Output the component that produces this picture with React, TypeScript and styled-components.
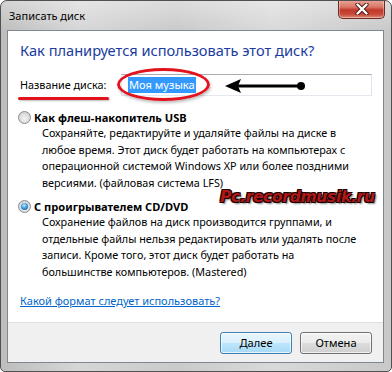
import React from "react";
import styled, { createGlobalStyle } from "styled-components";

const GlobalStyle = createGlobalStyle`
  html, body { margin: 0; padding: 0; background: #ffffff; }
  body { font-family: "Noto Sans", "Open Sans", sans-serif; }
  * { box-sizing: border-box; }
`;

const Window = styled.div`
  position: relative;
  width: 392px;
  height: 372px;
  border: 1px solid #505050;
  border-radius: 7px 7px 5px 5px;
  background:
    linear-gradient(to bottom, rgba(255,255,255,0.35), rgba(255,255,255,0) 30px),
    linear-gradient(to right, #bdbdbd 0%, #d6d6d6 20%, #cacaca 45%, #d9d9d9 70%, #c8c8c8 100%);
  display: flex;
  flex-direction: column;
  overflow: hidden;
`;

const TitleBar = styled.div`
  height: 29px;
  display: flex;
  justify-content: space-between;
  align-items: flex-start;
  flex-shrink: 0;
`;

const Title = styled.div`
  padding: 7px 0 0 8px;
  font-size: 11px;
  color: #000;
  line-height: 16px;
`;

const CloseButton = styled.div`
  width: 47px;
  height: 19px;
  margin: -1px 6px 0 0;
  border: 1px solid #6b2a22;
  border-top: none;
  border-radius: 0 0 5px 5px;
  background: linear-gradient(to bottom, #e9a899 0%, #d97565 40%, #c0392b 55%, #c94a3a 80%, #de8c7a 100%);
  display: flex;
  align-items: center;
  justify-content: center;
  box-shadow: inset 0 0 0 1px rgba(255,255,255,0.35);
`;

const Content = styled.div`
  flex: 1;
  margin: 0 7px 8px 6px;
  border: 1px solid #7f8790;
  display: flex;
  flex-direction: column;
  background: #ffffff;
`;

const Body = styled.div`
  flex: 1;
  padding: 9px 10px 0 12px;
  display: flex;
  flex-direction: column;
  color: #000;
  font-size: 10.8px;
`;

const Heading = styled.div`
  font-size: 14.6px;
  line-height: 20px;
  color: #1a3c9e;
`;

const NameRow = styled.div`
  margin-top: 14px;
  display: flex;
  align-items: center;
  height: 22px;
`;

const NameLabel = styled.span`
  width: 101px;
  flex-shrink: 0;
  line-height: 16px;
`;

const TextBox = styled.div`
  flex: 1;
  height: 22px;
  margin-right: 1px;
  border: 1px solid #e2e3ea;
  border-top-color: #abadb3;
  border-bottom-color: #e3e9ef;
  display: flex;
  align-items: center;
  padding-left: 6px;
`;

const Selection = styled.span`
  background: #3399ff;
  color: #ffffff;
  line-height: 16px;
  padding: 0 1px;
  font-size: 11.1px;
`;

const OptionRow = styled.label<{ $gap: number }>`
  margin-top: ${(p) => p.$gap}px;
  margin-left: -2px;
  display: flex;
  align-items: center;
  gap: 3px;
  height: 16px;
  font-weight: bold;
  font-size: 11.1px;
`;

const Radio = styled.span<{ $checked?: boolean }>`
  position: relative;
  width: 13px;
  height: 13px;
  border-radius: 50%;
  border: 1px solid #8a8b8c;
  background: radial-gradient(circle at 50% 60%, #f4f4f4 0%, #dcdcdc 55%, #c8c8c8 100%);
  flex-shrink: 0;
  &::after {
    content: "";
    position: absolute;
    left: 2px;
    top: 2px;
    width: 7px;
    height: 7px;
    border-radius: 50%;
    display: ${(p) => (p.$checked ? "block" : "none")};
    background: radial-gradient(circle at 45% 35%, #c8ecff 0%, #3f9ae0 45%, #0e4f93 100%);
  }
`;

const Description = styled.p`
  margin: 0 0 0 22px;
  line-height: 16.5px;
  white-space: nowrap;
`;

const HelpLink = styled.a`
  margin-top: 13px;
  color: #0066cc;
  text-decoration: underline;
  line-height: 16px;
  font-size: 11px;
  cursor: pointer;
`;

const Footer = styled.div`
  height: 40px;
  flex-shrink: 0;
  background: #f0f0f0;
  border-top: 1px solid #dfdfdf;
  display: flex;
  justify-content: flex-end;
  align-items: center;
  gap: 8px;
  padding-right: 11px;
`;

const Button = styled.button<{ $default?: boolean }>`
  width: 72px;
  height: 22px;
  border-radius: 3px;
  font-family: inherit;
  font-size: 11.1px;
  color: #000;
  padding: 0;
  border: 1px solid ${(p) => (p.$default ? "#3c7fb1" : "#707070")};
  background: ${(p) =>
    p.$default
      ? "linear-gradient(to bottom, #eaf6fd 0%, #d9f0fc 50%, #bee6fd 51%, #a7d9f5 100%)"
      : "linear-gradient(to bottom, #f2f2f2 0%, #ebebeb 50%, #dddddd 51%, #cfcfcf 100%)"};
  box-shadow: inset 0 0 0 1px rgba(255,255,255,0.7);
`;

const Ellipse = styled.div`
  position: absolute;
  left: 116px;
  top: 67px;
  width: 93px;
  height: 33px;
  border: 3px solid #e3131e;
  border-radius: 50%;
  box-shadow: 1px 2px 3px rgba(0,0,0,0.25);
  pointer-events: none;
`;

const Underline = styled.div`
  position: absolute;
  left: 17px;
  top: 96px;
  width: 91px;
  height: 3px;
  background: #e3131e;
  border-radius: 2px;
  box-shadow: 1px 1px 2px rgba(0,0,0,0.25);
`;

const Arrow = styled.svg`
  position: absolute;
  left: 224px;
  top: 76px;
`;

const Watermark = styled.div`
  position: absolute;
  left: 219px;
  top: 187px;
  font-family: "DejaVu Sans", sans-serif;
  font-weight: bold;
  font-style: italic;
  font-size: 15.5px;
  letter-spacing: -0.3px;
  color: #b01818;
  text-shadow:
    -1px -1px 0 #1a0000, 1px -1px 0 #1a0000, -1px 1px 0 #1a0000, 1px 1px 0 #1a0000,
    2px 2px 2px rgba(0,0,0,0.5);
`;

export default function App() {
  return (
    <>
      <GlobalStyle />
      <Window>
        <TitleBar>
          <Title>Записать диск</Title>
          <CloseButton>
            <svg width="14" height="12" viewBox="0 0 14 12">
              <path d="M2.5 1.5 L11.5 10.5 M11.5 1.5 L2.5 10.5" stroke="#4a1a14" strokeWidth="4.2" strokeLinecap="round" />
              <path d="M2.5 1.5 L11.5 10.5 M11.5 1.5 L2.5 10.5" stroke="#ffffff" strokeWidth="2.4" strokeLinecap="round" />
            </svg>
          </CloseButton>
        </TitleBar>
        <Content>
          <Body>
            <Heading>Как планируется использовать этот диск?</Heading>
            <NameRow>
              <NameLabel>Название диска:</NameLabel>
              <TextBox>
                <Selection>Моя музыка</Selection>
              </TextBox>
            </NameRow>
            <OptionRow $gap={13}>
              <Radio />
              Как флеш-накопитель USB
            </OptionRow>
            <Description>
              Сохраняйте, редактируйте и удаляйте файлы на диске в<br />
              любое время. Этот диск будет работать на компьютерах с<br />
              операционной системой Windows XP или более поздними<br />
              версиями. (файловая система LFS)
            </Description>
            <OptionRow $gap={7}>
              <Radio $checked />
              С проигрывателем CD/DVD
            </OptionRow>
            <Description>
              Сохранение файлов на диск производится группами, и<br />
              отдельные файлы нельзя редактировать или удалять после<br />
              записи. Кроме того, этот диск будет работать на<br />
              большинстве компьютеров. (Mastered)
            </Description>
            <HelpLink>Какой формат следует использовать?</HelpLink>
          </Body>
          <Footer>
            <Button $default>Далее</Button>
            <Button>Отмена</Button>
          </Footer>
        </Content>
        <Underline />
        <Ellipse />
        <Arrow width="84" height="18" viewBox="0 0 84 18">
          <path d="M0 9 L16 2 L13 9 L16 16 Z" fill="#000" />
          <line x1="12" y1="9" x2="76" y2="9" stroke="#000" strokeWidth="3" />
          <circle cx="76" cy="9" r="4" fill="#000" />
        </Arrow>
        <Watermark>Pc.recordmusik.ru</Watermark>
      </Window>
    </>
  );
}
